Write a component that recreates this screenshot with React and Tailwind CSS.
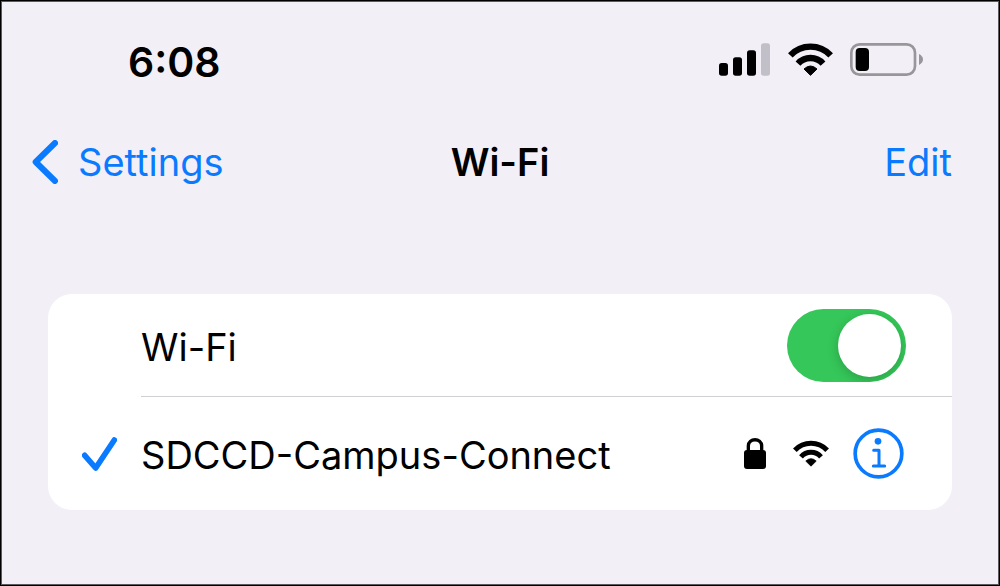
import React, { useState } from "react";

function SignalIcon({ className }) {
  return (
    <svg viewBox="0 0 153 99" className={className} aria-hidden="true">
      <rect x="0" y="60" width="27" height="38" rx="8" fill="#000" />
      <rect x="42" y="43" width="27" height="55" rx="8" fill="#000" />
      <rect x="84" y="22" width="27" height="76" rx="8" fill="#000" />
      <rect x="126" y="1" width="27" height="97" rx="8" fill="#c1bfc7" />
    </svg>
  );
}

function WifiIcon({ className }) {
  return (
    <svg viewBox="0 0 135 99" className={className} aria-hidden="true">
      <g fill="none" stroke="#000" strokeWidth="19">
        <path d="M7 37 A83 83 0 0 1 128 37" />
        <path d="M30 62 A50 50 0 0 1 105 62" />
      </g>
      <path
        d="M48 78 Q67.5 60 87 78 L67.5 97 Z"
        stroke="#000"
        strokeWidth="3"
        strokeLinejoin="round"
      />
    </svg>
  );
}

function BatteryIcon({ className }) {
  return (
    <svg viewBox="0 0 219 99" className={className} aria-hidden="true">
      <rect x="4" y="4" width="191" height="91" rx="25" fill="none" stroke="#98969b" strokeWidth="8" />
      <rect x="17" y="15" width="40" height="69" rx="12" fill="#000" />
      <path d="M207 33 C215 37 219 43 219 49 C219 56 215 62 207 66 Z" fill="#98969b" />
    </svg>
  );
}

function ChevronIcon({ className }) {
  return (
    <svg viewBox="0 0 78 132" className={className} aria-hidden="true">
      <path
        d="M69 9 L11 66 L69 123"
        fill="none"
        stroke="#0a7aff"
        strokeWidth="18"
        strokeLinecap="round"
        strokeLinejoin="round"
      />
    </svg>
  );
}

function CheckIcon({ className }) {
  return (
    <svg viewBox="0 0 105 102" className={className} aria-hidden="true">
      <path
        d="M8 55 L41 93 L97 9"
        fill="none"
        stroke="#0a7aff"
        strokeWidth="17"
        strokeLinecap="round"
        strokeLinejoin="round"
      />
    </svg>
  );
}

function LockIcon({ className }) {
  return (
    <svg viewBox="0 0 66 93" className={className} aria-hidden="true">
      <rect x="0" y="36" width="66" height="57" rx="9" />
      <path d="M13 40 V24 C13 -1 53 -1 53 24 V40" fill="none" stroke="#000" strokeWidth="10" />
    </svg>
  );
}

function InfoIcon({ className }) {
  return (
    <svg viewBox="0 0 153 153" className={className} aria-hidden="true">
      <g fill="none" stroke="#0a7aff" strokeWidth="9" strokeLinecap="round" strokeLinejoin="round">
        <circle cx="76.5" cy="76.5" r="70" strokeWidth="11" />
        <path d="M62 67 H78 V114 M61 114 H95" />
      </g>
      <circle cx="75" cy="40" r="10" fill="#0a7aff" />
    </svg>
  );
}

export default function App() {
  const [wifiOn, setWifiOn] = useState(true);

  return (
    <div className="min-h-screen bg-black p-px font-['Inter',sans-serif] text-[38px] leading-12 text-black">
      <div className="min-h-[calc(100vh-2px)] border border-[#5c5a5e] bg-[#f2eff6]">
        {/* Status bar */}
        <header className="flex items-start justify-between pt-9 pr-[75px] pl-[126px]">
          <time className="text-[41px] font-semibold">6:08</time>
          <div className="flex items-center pt-[5px]">
            <SignalIcon className="h-[33px] w-[51px]" />
            <WifiIcon className="ml-[18px] h-[33px] w-[45px]" />
            <BatteryIcon className="ml-[17px] h-[33px] w-[73px]" />
          </div>
        </header>

        {/* Navigation */}
        <nav className="grid grid-cols-[1fr_auto_1fr] items-center px-[30px] pt-13">
          <a href="#settings" className="flex items-center gap-5 text-[#0a7aff]">
            <ChevronIcon className="h-11 w-[26px]" />
            Settings
          </a>
          <h1 className="font-semibold">Wi-Fi</h1>
          <button type="button" className="justify-self-end pr-4 text-[#0a7aff]">
            Edit
          </button>
        </nav>

        {/* Wi-Fi card */}
        <main className="mx-[46px] mt-27 rounded-3xl bg-white">
          <div className="ml-[93px] flex h-[103px] items-center justify-between border-b border-[#d0d0d2] pr-[46px]">
            <label htmlFor="wifi" className="pt-1">
              Wi-Fi
            </label>
            <input
              id="wifi"
              type="checkbox"
              role="switch"
              checked={wifiOn}
              onChange={(e) => setWifiOn(e.target.checked)}
              className="flex h-[73px] w-[119px] appearance-none items-center overflow-hidden rounded-full bg-[#e9e9ea] px-[5px] before:size-[63px] before:rounded-full before:bg-white before:shadow-[0_3px_12px_rgba(0,0,0,0.2)] before:content-[''] checked:justify-end checked:bg-[#35c759]"
            />
          </div>

          <div className="flex h-[113px] items-center pr-12 pl-[34px]">
            <CheckIcon className="h-[34px] w-[35px]" />
            <span className="ml-6 flex-1 pt-0.5">SDCCD-Campus-Connect</span>
            <LockIcon className="h-[31px] w-[22px]" />
            <WifiIcon className="ml-[27px] h-[27px] w-9" />
            <button type="button" aria-label="Network details" className="ml-6">
              <InfoIcon className="size-[51px]" />
            </button>
          </div>
        </main>
      </div>
    </div>
  );
}
